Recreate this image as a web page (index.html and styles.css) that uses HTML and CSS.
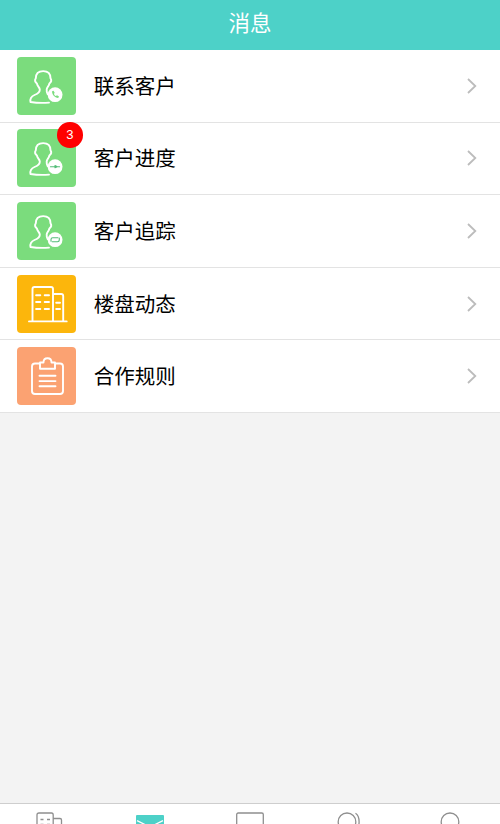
FILE: index.html
```html
<!DOCTYPE html>
<html lang="zh-CN">
<head>
<meta charset="utf-8">
<title>消息</title>
<link rel="stylesheet" href="styles.css">
</head>
<body>
<svg class="defs" aria-hidden="true">
  <symbol id="person" viewBox="0 0 58 58">
    <path d="M31.5 45.6 Q22 46.4 13 45 C12.3 41.5 13.5 39.5 17 38 C21 36.3 22.6 35 22.3 32.3 C22 30.3 20 29.3 19.4 26.5 C17.4 25 17.4 22.7 18.3 21.3 C18.3 16.5 21.3 14.1 25.7 14.1 C30.1 14.1 33 16.5 33 21.3 C33.9 22.7 33.9 25 31.9 26.5 C31.3 29.3 29.5 30.3 29.2 32.3 C29 34.3 29.4 36 30.2 37.2"/>
    <circle class="solid" cx="37.6" cy="37.7" r="7.4"/>
  </symbol>
  <symbol id="chevron" viewBox="0 0 10 16"><path d="M1 1 L8.3 8 L1 15"/></symbol>
</svg>
<div class="app">
  <header class="header">消息</header>
  <main class="content">
    <ul class="list">
      <li class="row">
        <span class="tile green"><svg viewBox="0 0 58 58"><use href="#person"/><path class="handset" d="M34.6 34.3 C34.3 37.5 37.2 40.8 40.7 40.9 L41.5 39.5 L39.5 38.2 L38.4 39 C37.4 38.6 36.7 37.7 36.4 36.9 L37.2 35.8 L36 33.7 Z"/></svg></span>
        <span class="label">联系客户</span>
        <svg class="chevron"><use href="#chevron"/></svg>
      </li>
      <li class="row">
        <span class="tile green"><svg viewBox="0 0 58 58"><use href="#person"/><path class="mark" d="M32.9 37.7 H42.1 M37.5 36.6 L39.8 37.7 L37.5 38.8 Z"/></svg><span class="badge">3</span></span>
        <span class="label">客户进度</span>
        <svg class="chevron"><use href="#chevron"/></svg>
      </li>
      <li class="row">
        <span class="tile green"><svg viewBox="0 0 58 58"><use href="#person"/><path class="mark" d="M33.5 39.3 V37.4 Q33.5 35.7 35.3 35.7 H40.5 M41.8 36.1 V38 Q41.8 39.7 40 39.7 H34.8"/></svg></span>
        <span class="label">客户追踪</span>
        <svg class="chevron"><use href="#chevron"/></svg>
      </li>
      <li class="row">
        <span class="tile amber"><svg viewBox="0 0 58 58"><path d="M11.5 46.4 H49.2 M15 46.4 V14 Q15 12 17 12 H33.5 Q35.5 12 35.5 14 V46.4 M35.5 19 H43.7 Q45.7 19 45.7 21 V46.4"/><path d="M18.6 20.2 H22.8 M27.2 20.2 H31.5 M18.6 27 H22.8 M27.2 27 H31.5 M18.6 34 H22.8 M27.2 34 H31.5 M38.7 27.7 H42.5 M38.7 34 H42.5"/></svg></span>
        <span class="label">楼盘动态</span>
        <svg class="chevron"><use href="#chevron"/></svg>
      </li>
      <li class="row">
        <span class="tile orange"><svg viewBox="0 0 58 58"><path d="M22.5 16.5 H17.5 Q14.5 16.5 14.5 19.5 V44 Q14.5 47 17.5 47 H42.5 Q45.5 47 45.5 44 V19.5 Q45.5 16.5 42.5 16.5 H37.5 M22.5 21.8 V15.5 H26 C26 12.8 27.8 11.3 30 11.3 C32.2 11.3 34 12.8 34 15.5 H37.5 V21.8 Z M22 28.8 H38 M22 34.1 H38 M22 39.2 H38"/></svg></span>
        <span class="label">合作规则</span>
        <svg class="chevron"><use href="#chevron"/></svg>
      </li>
    </ul>
  </main>
  <nav class="tabs">
    <span class="tab"><svg viewBox="0 0 28 20"><path d="M1 20 V3 Q1 1 3 1 H15.5 Q17.2 1 17.2 3 V20 M17.2 6.5 H24 Q25.5 6.5 25.5 8 V20"/><path d="M4.5 7.5 H7.5 M11 7.5 H14 M4.5 12.5 H7.5 M11 12.5 H14"/></svg></span>
    <span class="tab"><svg viewBox="0 0 28 20"><rect class="envelope" y="3" width="28" height="20" rx="1"/><path class="flap" d="M1 8.7 L14 15 L27 8.7"/></svg></span>
    <span class="tab"><svg viewBox="0 0 28 20"><rect x=".7" y="1" width="26.6" height="22" rx="1.5"/></svg></span>
    <span class="tab"><svg viewBox="0 0 28 20"><circle cx="11" cy="9.8" r="8.8"/><path d="M19.5 1.2 C24.3 4.2 24.3 15 19.5 18.5"/></svg></span>
    <span class="tab"><svg viewBox="0 0 28 20"><circle cx="14" cy="9.8" r="8.8"/></svg></span>
  </nav>
</div>
</body>
</html>
```

FILE: styles.css
```css
* { box-sizing: border-box; }
body {
  margin: 0;
  font-family: "Liberation Sans", "Noto Sans CJK SC", sans-serif;
  color: #000;
}
.defs { position: absolute; width: 0; height: 0; }
.app {
  height: 824px;
  display: flex;
  flex-direction: column;
  overflow: hidden;
  background: #f3f3f3;
}
.header {
  height: 50px;
  flex: none;
  display: flex;
  align-items: center;
  justify-content: center;
  padding-bottom: 8px;
  background: #4dd1c8;
  color: #fff;
  font-size: 21.5px;
  font-weight: 400;
}
.content { flex: 1; }
.list { margin: 0; padding: 0; list-style: none; }
.row {
  height: 72.6px;
  display: flex;
  align-items: center;
  padding: 0 23px 0 17px;
  background: #fff;
  border-bottom: 1px solid #e3e3e3;
}
.tile {
  position: relative;
  width: 59px;
  height: 58px;
  flex: none;
  border-radius: 4px;
}
.tile svg {
  display: block;
  width: 59px;
  height: 58px;
  fill: none;
  stroke: #fff;
  stroke-width: 1.9;
  stroke-linecap: round;
  stroke-linejoin: round;
}
.green { background: #7bdc7d; }
.amber { background: #fcb60c; }
.orange { background: #fba272; }
.solid { fill: #fff; stroke: none; }
.tile .handset { fill: #7bdc7d; stroke: none; }
.tile .mark { stroke: #55bd79; stroke-width: 1.1; }
.badge {
  position: absolute;
  top: -7px;
  right: -6.5px;
  width: 25.5px;
  height: 25.5px;
  border-radius: 50%;
  background: #f00;
  color: #fff;
  font-size: 13px;
  line-height: 26px;
  text-align: center;
}
.label {
  flex: 1;
  margin-left: 17.7px;
  padding-top: 2px;
  font-size: 20.5px;
  line-height: 30px;
}
.chevron {
  width: 10px;
  height: 16px;
  fill: none;
  stroke: #bcbcbc;
  stroke-width: 1.8;
}
.tabs {
  height: 21px;
  flex: none;
  display: flex;
  background: #fff;
  border-top: 1px solid #cecece;
}
.tab {
  flex: 1;
  display: flex;
  justify-content: center;
  padding-top: 8px;
}
.tab svg {
  width: 28px;
  height: 20px;
  flex: none;
  fill: none;
  stroke: #8f8f8f;
  stroke-width: 1.3;
}
.tab .envelope { fill: #4dd1c8; stroke: none; }
.tab .flap { stroke: #fff; }
```
